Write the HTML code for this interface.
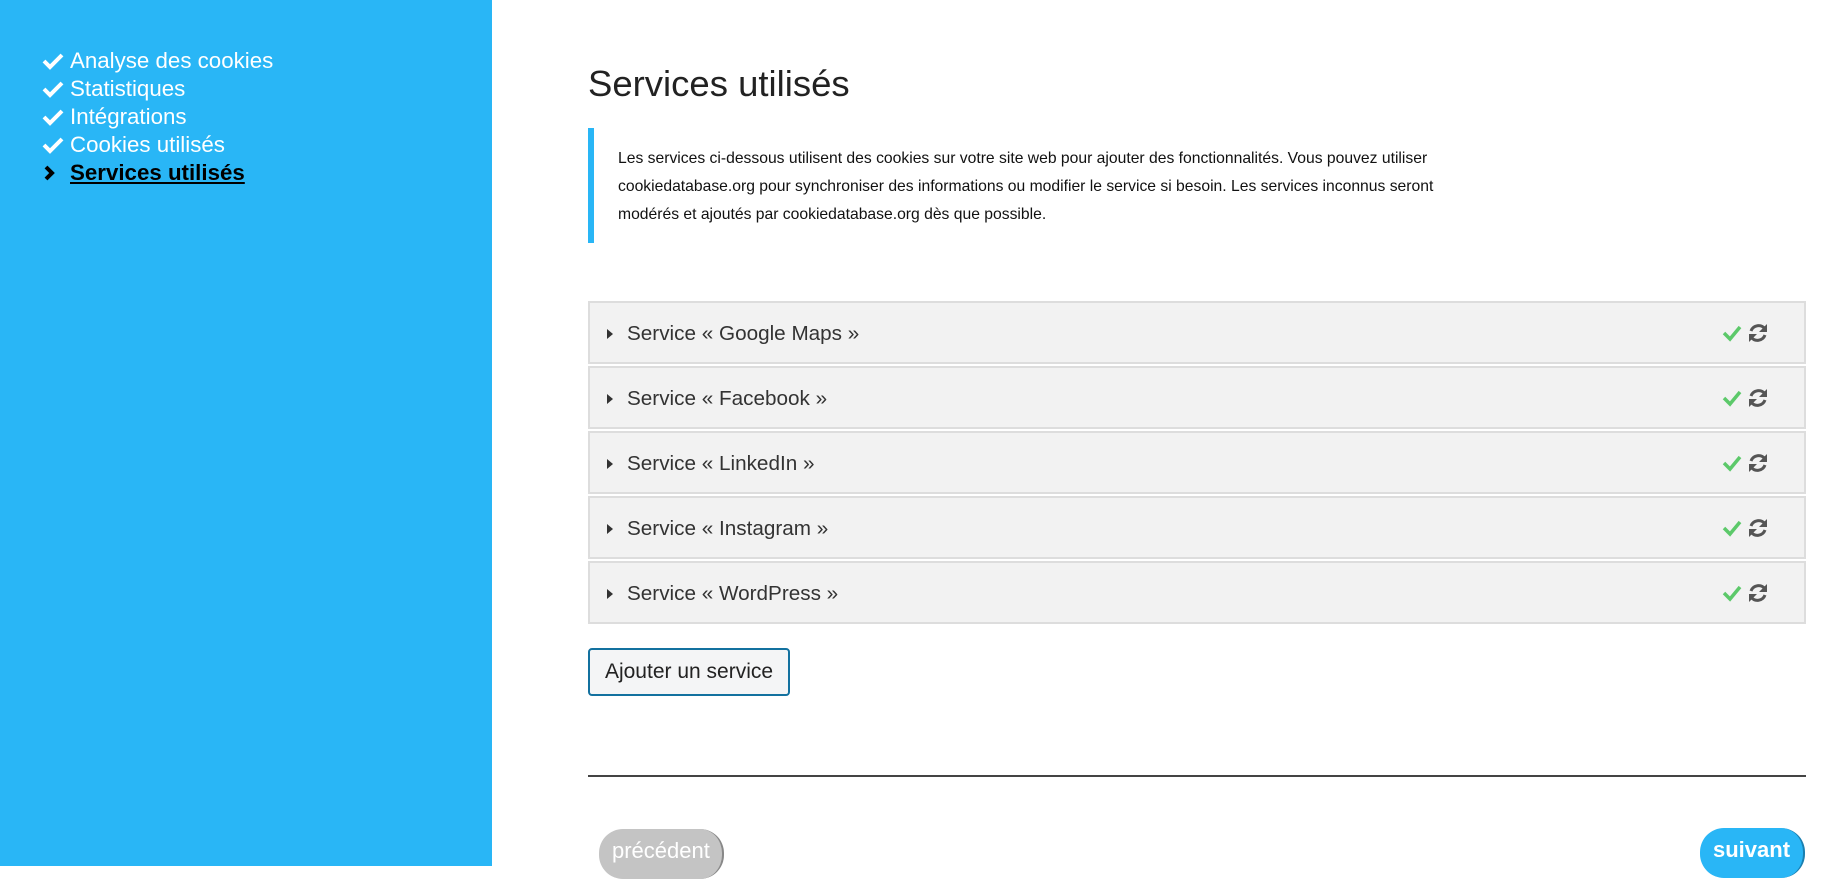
<!DOCTYPE html>
<html><head><meta charset="utf-8"><style>
*{margin:0;padding:0;box-sizing:border-box}
body{width:1832px;height:866px;overflow:hidden;font-family:"Liberation Sans",sans-serif;background:#fff;position:relative}
.side{position:absolute;left:0;top:0;width:492px;height:866px;background:#29b6f6}
.side ul{list-style:none;position:absolute;left:42px;top:47px}
.side li{height:28px;line-height:28px;font-size:22.3px;color:#fff;display:flex;align-items:center}
.side li svg{width:22px;height:20px;margin-right:6px}
.side li.cur{color:#000;font-weight:bold;text-decoration:underline}
h1{position:absolute;left:588px;top:63px;font-size:36.5px;font-weight:normal;color:#222}
.quote{position:absolute;left:588px;top:128px;width:1218px;height:115px;border-left:6px solid #29b6f6;padding:17px 0 0 24px;font-size:15.7px;line-height:28px;color:#111}
.quote div{width:860px}
.acc{position:absolute;left:588px;top:301px;width:1218px}
.row{height:63px;background:#f2f2f2;border:2px solid #ddd;margin-bottom:2px;position:relative;font-size:20.7px;color:#333}
.row .tri{position:absolute;left:17px;top:26px;width:0;height:0;border-left:6px solid #333;border-top:5px solid transparent;border-bottom:5px solid transparent}
.row span.t{position:absolute;left:37px;top:19px}
.row .ic{position:absolute;left:1131px;top:19px}
.btn{position:absolute;left:588px;top:648px;width:202px;height:48px;border:2px solid #13719f;border-radius:4px;background:#f4f5f6;font-size:21px;color:#222;text-align:center;line-height:44px}
.hr{position:absolute;left:588px;top:775px;width:1218px;height:2px;background:#444}
.prev{position:absolute;left:599px;top:829px;width:125px;height:50px;border-radius:24px;background:#c4c4c4;border-right:2px solid #888;color:#fff;font-size:22px;padding:9px 0 0 13px}
.next{position:absolute;left:1700px;top:828px;width:105px;height:50px;border-radius:24px;background:#29b6f6;border-right:2px solid #1a7fb0;color:#fff;font-size:22px;font-weight:bold;padding:9px 0 0 13px}
</style></head><body>
<div class="side"><ul>
<li><svg viewBox="0 0 22 20"><path d="M2 10l6 6L20 4" stroke="#fff" stroke-width="4" fill="none"/></svg>Analyse des cookies</li>
<li><svg viewBox="0 0 22 20"><path d="M2 10l6 6L20 4" stroke="#fff" stroke-width="4" fill="none"/></svg>Statistiques</li>
<li><svg viewBox="0 0 22 20"><path d="M2 10l6 6L20 4" stroke="#fff" stroke-width="4" fill="none"/></svg>Intégrations</li>
<li><svg viewBox="0 0 22 20"><path d="M2 10l6 6L20 4" stroke="#fff" stroke-width="4" fill="none"/></svg>Cookies utilisés</li>
<li class="cur"><svg viewBox="0 0 22 20"><path d="M4 4l6 6-6 6" stroke="#000" stroke-width="4" fill="none"/></svg>Services utilisés</li>
</ul></div>
<h1>Services utilisés</h1>
<div class="quote"><div>Les services ci-dessous utilisent des cookies sur votre site web pour ajouter des fonctionnalités. Vous pouvez utiliser cookiedatabase.org pour synchroniser des informations ou modifier le service si besoin. Les services inconnus seront modérés et ajoutés par cookiedatabase.org dès que possible.</div></div>
<div class="acc">
<div class="row"><i class="tri"></i><span class="t">Service « Google Maps »</span><svg class="ic" width="50" height="22" viewBox="0 0 50 22"><path d="M3 11l6 6L19 5" stroke="#5cc96a" stroke-width="3.5" fill="none"/><path d="M30 9a8 8 0 0 1 14-2M44 13a8 8 0 0 1-14 2" stroke="#555" stroke-width="3" fill="none"/><path d="M46 2v8h-8zM28 20v-8h8z" fill="#555"/></svg></div>
<div class="row"><i class="tri"></i><span class="t">Service « Facebook »</span><svg class="ic" width="50" height="22" viewBox="0 0 50 22"><path d="M3 11l6 6L19 5" stroke="#5cc96a" stroke-width="3.5" fill="none"/><path d="M30 9a8 8 0 0 1 14-2M44 13a8 8 0 0 1-14 2" stroke="#555" stroke-width="3" fill="none"/><path d="M46 2v8h-8zM28 20v-8h8z" fill="#555"/></svg></div>
<div class="row"><i class="tri"></i><span class="t">Service « LinkedIn »</span><svg class="ic" width="50" height="22" viewBox="0 0 50 22"><path d="M3 11l6 6L19 5" stroke="#5cc96a" stroke-width="3.5" fill="none"/><path d="M30 9a8 8 0 0 1 14-2M44 13a8 8 0 0 1-14 2" stroke="#555" stroke-width="3" fill="none"/><path d="M46 2v8h-8zM28 20v-8h8z" fill="#555"/></svg></div>
<div class="row"><i class="tri"></i><span class="t">Service « Instagram »</span><svg class="ic" width="50" height="22" viewBox="0 0 50 22"><path d="M3 11l6 6L19 5" stroke="#5cc96a" stroke-width="3.5" fill="none"/><path d="M30 9a8 8 0 0 1 14-2M44 13a8 8 0 0 1-14 2" stroke="#555" stroke-width="3" fill="none"/><path d="M46 2v8h-8zM28 20v-8h8z" fill="#555"/></svg></div>
<div class="row"><i class="tri"></i><span class="t">Service « WordPress »</span><svg class="ic" width="50" height="22" viewBox="0 0 50 22"><path d="M3 11l6 6L19 5" stroke="#5cc96a" stroke-width="3.5" fill="none"/><path d="M30 9a8 8 0 0 1 14-2M44 13a8 8 0 0 1-14 2" stroke="#555" stroke-width="3" fill="none"/><path d="M46 2v8h-8zM28 20v-8h8z" fill="#555"/></svg></div>
</div>
<div class="btn">Ajouter un service</div>
<div class="hr"></div>
<div class="prev">précédent</div>
<div class="next">suivant</div>
</body></html>
